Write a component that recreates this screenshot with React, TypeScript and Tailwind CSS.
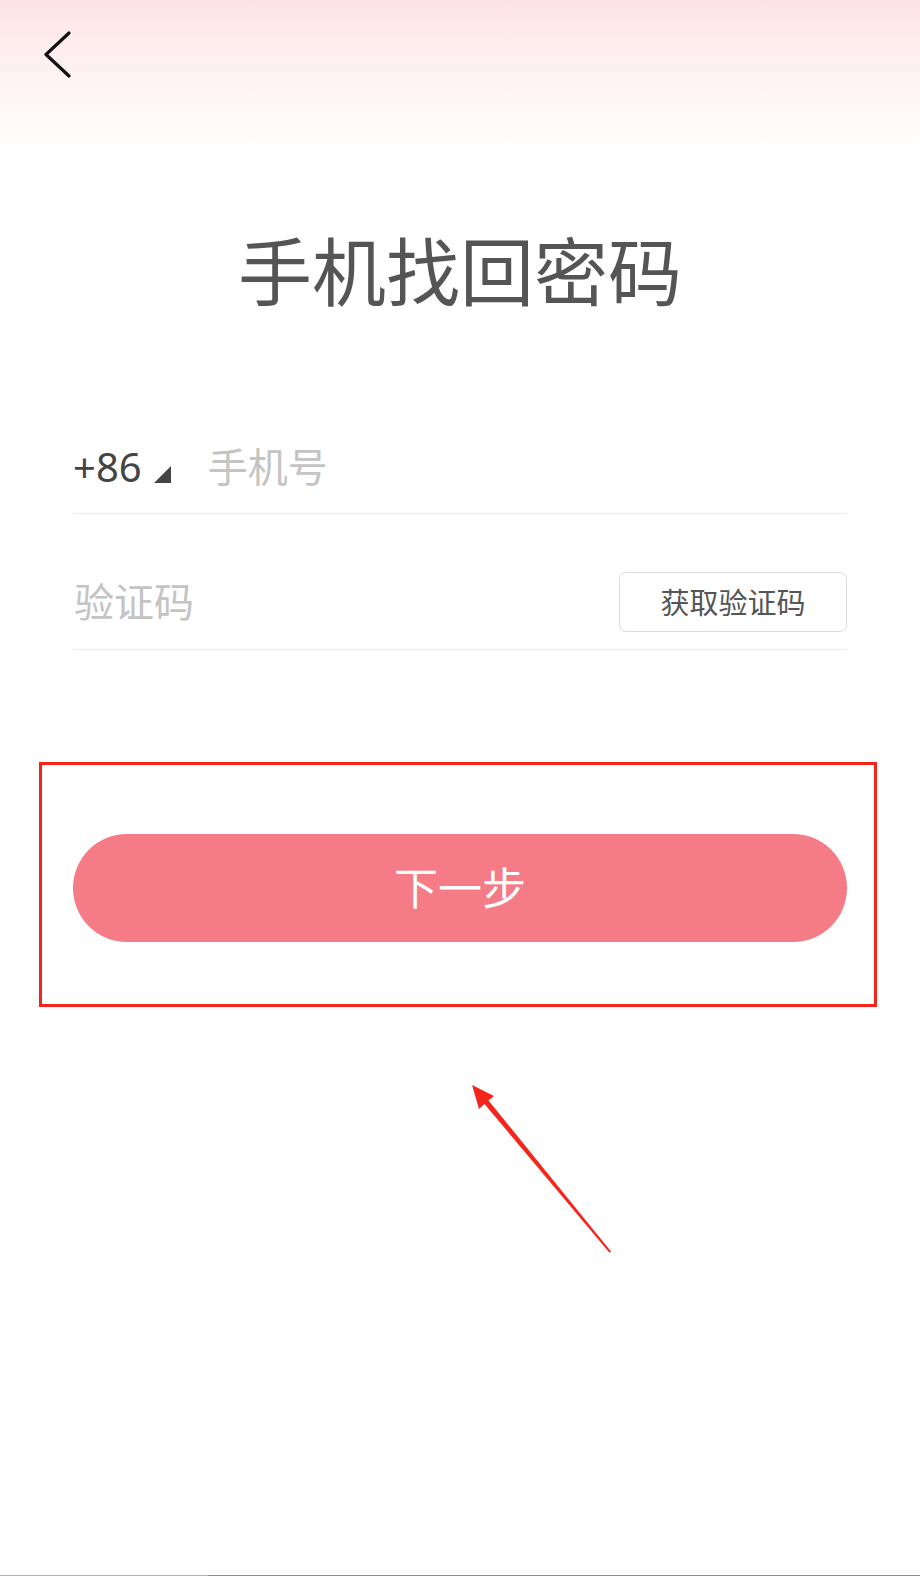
import React from "react";

const font = { fontFamily: '"Noto Sans", "Noto Sans CJK SC", sans-serif' };

export default function App() {
  return (
    <div
      className="relative flex h-[1576px] w-[920px] flex-col overflow-hidden bg-[linear-gradient(to_bottom,#fde3e5_0px,#fff3f4_80px,#ffffff_155px)]"
      style={font}
    >
      {/* back */}
      <div className="pl-[44px] pt-[30px]">
        <svg width="30" height="50" viewBox="44 30 30 50">
          <polyline
            points="69,33 46,54.5 69,76"
            fill="none"
            stroke="#111"
            strokeWidth="3.2"
            strokeLinecap="round"
            strokeLinejoin="round"
          />
        </svg>
      </div>

      {/* title */}
      <h1 className="mt-[155px] text-center text-[74px] leading-[74px] font-normal text-[#555555]">
        手机找回密码
      </h1>

      {/* form */}
      <div className="mt-[128px] px-[73px]">
        <div className="flex h-[77px] items-start border-b border-[#ececec]">
          <div className="flex h-[60px] items-center">
            <span className="text-[40px] leading-none text-[#444444]">+86</span>
            <svg className="ml-[12px] mt-[14px]" width="17" height="17" viewBox="0 0 17 17">
              <polygon points="17,0 17,17 0,17" fill="#444444" />
            </svg>
            <span className="ml-[37px] text-[40px] leading-none text-[#c4c4c4]">手机号</span>
          </div>
        </div>
        <div className="flex h-[136px] items-end border-b border-[#ececec] pb-[17px]">
          <div className="flex h-[60px] w-full items-center justify-between">
            <span className="ml-[1px] text-[40px] leading-none text-[#c4c4c4]">验证码</span>
            <button className="flex h-[60px] w-[228px] items-center justify-center rounded-[7px] border border-[#dcdcdc] bg-white text-[29px] leading-none text-[#555555]">
              获取验证码
            </button>
          </div>
        </div>
      </div>

      {/* annotated next button */}
      <div className="ml-[39px] mt-[112px] w-[838px] border-[3px] border-[#f5241c] pb-[62px] pl-[31px] pt-[69px]">
        <button className="flex h-[108px] w-[774px] items-center justify-center rounded-full bg-[#f57b86] text-[44px] leading-none text-white">
          下一步
        </button>
      </div>

      {/* arrow annotation */}
      <svg
        className="absolute left-[460px] top-[1075px]"
        width="160"
        height="190"
        viewBox="460 1075 160 190"
      >
        <polygon
          points="472,1085 494,1096 488.5,1100.5 611,1251.5 609.5,1252.8 484.5,1104 479,1109"
          fill="#f5241c"
        />
      </svg>

      {/* bottom edge */}
      <div className="mt-auto flex h-px w-full">
        <div className="h-px w-[208px] bg-[#b0b0b0]" />
        <div className="h-px flex-1 bg-[#8c8c8c]" />
      </div>
    </div>
  );
}
